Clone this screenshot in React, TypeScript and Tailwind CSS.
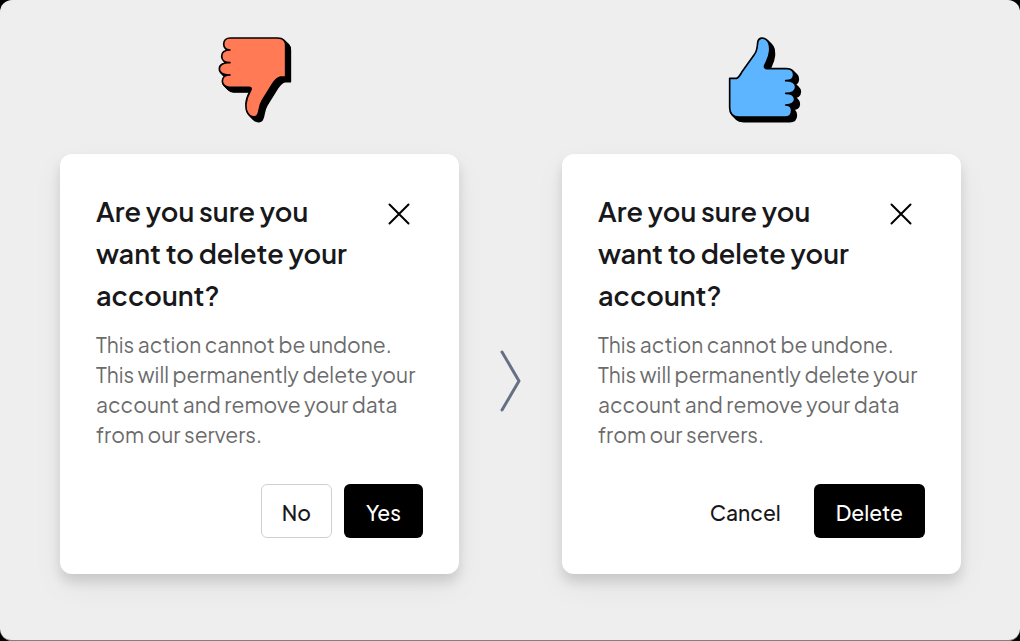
import { clsx } from 'clsx';

interface ConfirmDialogProps {
  id: string;
  cancelLabel: string;
  confirmLabel: string;
  cancelStyle: 'outline' | 'ghost';
}

// How far the black side of the hand icons is pushed out, in view box units
const DEPTH = [14, 12, 9, 6, 3];

const THUMB_DOWN =
  'M76 39 H218 Q242 39 242 62 V156 H226 C214 158 207 169 198 184 L172 226 C161 244 165 255 159 267 C155 278 143 278 134 271 C125 263 122 248 123 236 C124 216 132 206 138 194 C139 189 137 187 132 187 H72 C61 185 52 178 52 168 C52 157 61 150 75 150 C55 151 43 143 43 131 C43 119 57 112 75 113 C59 113 50 105 50 94 C50 82 60 75 75 75 C64 75 56 68 56 57 C56 46 64 39 76 39 Z';

const THUMB_UP =
  'M44 160 H64 C72 158 75 151 80 142 L117 90 C129 76 126 59 129 48 C133 37 146 37 154 44 C163 51 165 66 164 79 C162 99 155 107 149 122 C147 127 151 131 156 131 H214 C228 131 236 138 236 149 C236 160 228 167 212 167 C231 167 242 175 242 186 C242 198 230 205 212 205 C231 205 239 212 239 223 C239 234 230 240 212 240 C224 240 230 247 230 257 C230 269 222 276 210 276 H72 C54 276 44 266 44 248 Z';

function Hand({ path, fill, viewBox, label }: { path: string; fill: string; viewBox: string; label: string }) {
  return (
    <svg className="w-[99px] h-[90px]" viewBox={viewBox} role="img" aria-label={label}>
      <g stroke="#000" strokeWidth="5" strokeLinejoin="round">
        {DEPTH.map((d) => (
          <path key={d} d={path} transform={`translate(${d} ${d})`} />
        ))}
        <path d={path} fill={fill} />
      </g>
    </svg>
  );
}

function ConfirmDialog({ id, cancelLabel, confirmLabel, cancelStyle }: ConfirmDialogProps) {
  return (
    <section
      role="dialog"
      aria-labelledby={`${id}-title`}
      aria-describedby={`${id}-text`}
      className="bg-white rounded-xl p-9 shadow-[0_8px_12px_rgba(0,0,0,0.12),0_12px_32px_rgba(0,0,0,0.05)]"
    >
      <div className="flex items-start justify-between">
        <h2 id={`${id}-title`} className="max-w-[270px] text-[27px] leading-[42px] font-semibold text-[#18181b]">
          Are you sure you want to delete your account?
        </h2>
        <button type="button" aria-label="Close" className="p-3 text-black">
          <svg className="w-6 h-6" viewBox="0 0 24 24" fill="none" stroke="currentColor" strokeWidth="2" strokeLinecap="round">
            <path d="M2.5 2.5 L21.5 21.5 M21.5 2.5 L2.5 21.5" />
          </svg>
        </button>
      </div>

      <p id={`${id}-text`} className="mt-3.5 text-[21px] leading-[30px] text-[#6b6b6b]">
        This action cannot be undone. This will permanently delete your account and remove your data from our servers.
      </p>

      <div className="mt-[34px] flex justify-end gap-3">
        <button
          type="button"
          className={clsx(
            'h-[54px] px-5 pt-1 rounded-md border text-[21px] font-medium text-[#18181b]',
            cancelStyle === 'outline' ? 'border-[#d0d0d0]' : 'border-transparent'
          )}
        >
          {cancelLabel}
        </button>
        <button type="button" className="h-[54px] px-[22px] pt-1 rounded-md bg-black text-[21px] font-medium text-white">
          {confirmLabel}
        </button>
      </div>
    </section>
  );
}

export default function App() {
  return (
    <div className="min-h-screen bg-black flex">
      <main className="flex-1 bg-[#eee] rounded-xl border-b border-[#808080] pl-[60px] pr-[59px] pt-[34px] pb-16 font-['Plus_Jakarta_Sans','Inter',sans-serif]">
        <div className="grid grid-cols-[1fr_103px_1fr] gap-y-[30px] items-center">
          <div className="flex justify-center">
            <Hand path={THUMB_DOWN} fill="#ff7a55" viewBox="15 27 297 270" label="Thumbs down" />
          </div>
          <div />
          <div className="flex justify-center">
            <Hand path={THUMB_UP} fill="#5eb5ff" viewBox="-9 27 297 270" label="Thumbs up" />
          </div>

          <ConfirmDialog id="vague" cancelLabel="No" confirmLabel="Yes" cancelStyle="outline" />

          {/* Arrow between the two dialogs */}
          <div className="flex justify-center pt-[34px]">
            <svg
              className="w-6 h-16"
              viewBox="0 0 24 64"
              fill="none"
              stroke="#667085"
              strokeWidth="3"
              strokeLinecap="round"
              strokeLinejoin="round"
              aria-hidden="true"
            >
              <path d="M3 3 L20 32 L3 61" />
            </svg>
          </div>

          <ConfirmDialog id="clear" cancelLabel="Cancel" confirmLabel="Delete" cancelStyle="ghost" />
        </div>
      </main>
    </div>
  );
}
